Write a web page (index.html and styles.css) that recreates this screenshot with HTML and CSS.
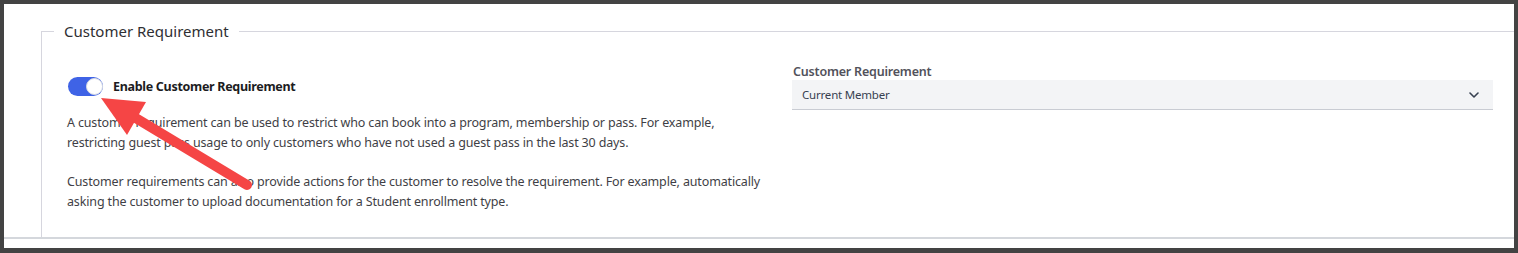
FILE: index.html
```html
<!DOCTYPE html>
<html lang="en">
<head>
    <meta charset="UTF-8">
    <title>Customer Requirement</title>
    <link rel="stylesheet" href="styles.css">
</head>
<body>

    <div class="frame">
        <div class="section">
            <fieldset class="group">
                <legend>Customer Requirement</legend>

                <div class="columns">
                    <div class="col-left">
                        <label class="switch-row">
                            <span class="switch"><span class="knob"></span></span>
                            <span class="switch-label">Enable Customer Requirement</span>
                        </label>

                        <p>A customer requirement can be used to restrict who can book into a program, membership or pass. For example, restricting guest pass usage to only customers who have not used a guest pass in the last 30 days.</p>
                        <p>Customer requirements can also provide actions for the customer to resolve the requirement. For example, automatically asking the customer to upload documentation for a Student enrollment type.</p>
                    </div>

                    <div class="col-right">
                        <div class="field-label">Customer Requirement</div>
                        <div class="select">
                            <span>Current Member</span>
                            <svg class="chevron" width="10" height="6" viewBox="0 0 10 6">
                                <path d="M1 1l4 4 4-4" fill="none" stroke="#374151" stroke-width="1.6" stroke-linecap="round" stroke-linejoin="round"/>
                            </svg>
                        </div>
                    </div>
                </div>
            </fieldset>
        </div>
    </div>

    <!-- annotation arrow drawn over the screenshot -->
    <svg class="arrow" width="1518" height="253" viewBox="0 0 1518 253">
        <line x1="134" y1="117" x2="247" y2="185" stroke="#f54545" stroke-width="10" stroke-linecap="round"/>
        <polygon points="101,98 146,102 127,135" fill="#f54545"/>
    </svg>

</body>
</html>
```

FILE: styles.css
```css
body {
    margin: 0;
    background-color: #434343;
    font-family: "Noto Sans", "Open Sans", sans-serif;
    color: #3f3f46;
}
.frame {
    margin: 4px 4px 5px 4px;
    height: 244px;
    background-color: white;
    overflow: hidden;
}
.section {
    padding-left: 37px;
    padding-top: 16px;
    margin-right: -40px;
    border-bottom: 2px solid #d4d7dc;
}
.group {
    margin: 0;
    border: 1px solid #d6d6de;
    border-bottom: none;
    padding: 21px 25px 25px 25px;
}
.group legend {
    margin-left: -13px;
    padding: 0 10px;
    font-size: 15px;
    line-height: 22px;
    color: #2f2f33;
}
.columns {
    display: grid;
    grid-template-columns: 701px 701px;
    column-gap: 24px;
}
.switch-row {
    display: flex;
    align-items: center;
    gap: 10px;
    margin-top: 14px;
}
.switch {
    display: flex;
    justify-content: flex-end;
    align-items: center;
    width: 35px;
    height: 19px;
    border-radius: 10px;
    background-color: #3f63e6;
    margin-left: 1px;
}
.knob {
    width: 17px;
    height: 17px;
    border-radius: 50%;
    background-color: white;
    border: 1px solid #dadde3;
    box-sizing: border-box;
}
.switch-label {
    font-size: 12.5px;
    font-weight: bold;
    letter-spacing: -0.3px;
    color: #1c1c22;
}
.col-left p {
    font-size: 12.5px;
    letter-spacing: -0.15px;
    line-height: 20px;
    margin: 17px 0 0 0;
}
.col-left p + p {
    margin-top: 19px;
}
.field-label {
    font-size: 12.5px;
    font-weight: 600;
    letter-spacing: -0.2px;
    line-height: 17px;
    color: #52525b;
    padding-left: 1px;
}
.select {
    display: flex;
    align-items: center;
    justify-content: space-between;
    height: 29px;
    padding: 0 14px 0 10px;
    background-color: #f3f4f6;
    border-bottom: 1px solid #c9ccd3;
    font-size: 11.5px;
    letter-spacing: -0.2px;
    color: #374151;
}
.arrow {
    position: absolute;
    left: 0;
    top: 0;
    pointer-events: none;
}
```
